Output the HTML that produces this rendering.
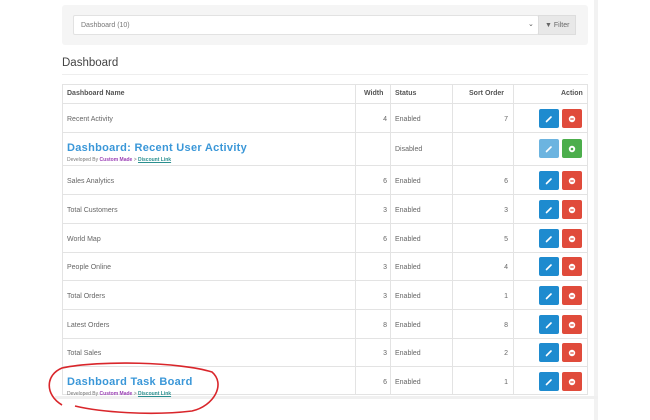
<!DOCTYPE html>
<html><head><style>
*{margin:0;padding:0;box-sizing:border-box}
body{width:650px;height:420px;background:#fff;font-family:"Liberation Sans",sans-serif;position:relative;overflow:hidden;color:#555}
.abs{position:absolute}
.cell{position:absolute;font-size:7px;color:#666}
.btn{position:absolute;width:20px;height:19px;border-radius:2px}
.btn svg{position:absolute;left:6px;top:5.5px}
.hl{position:absolute;left:62px;width:526px;height:1px;background:#e3e3e3}
.vl{position:absolute;top:84px;width:1px;height:311px;background:#e3e3e3}
</style></head><body>
<div class="abs" style="left:594px;top:0;width:4px;height:420px;background:#f2f2f2"></div>
<div class="abs" style="left:55px;top:396px;width:543px;height:3px;background:#f0f0f0"></div>
<div class="abs" style="left:62px;top:5px;width:526px;height:40px;background:#f5f5f5;border-radius:3px"></div>
<div class="abs" style="left:73px;top:15px;width:466px;height:20px;background:#fff;border:1px solid #e2e2e2;border-radius:2px"></div>
<div class="cell" style="left:81px;top:22px;color:#777">Dashboard (10)</div>
<div class="cell" style="left:528px;top:20px;color:#555">&#8964;</div>
<div class="abs" style="left:538px;top:15px;width:38px;height:20px;background:#e8e8e8;border:1px solid #ddd"></div>
<div class="cell" style="left:545px;top:22px;color:#666"><b>&#9660;</b> Filter</div>
<div class="abs" style="left:62px;top:57px;font-size:11.5px;color:#444">Dashboard</div>
<div class="abs" style="left:62px;top:74px;width:526px;height:1px;background:#eee"></div>
<div class="abs" style="left:62px;top:84px;width:526px;height:311px;border:1px solid #e3e3e3"></div>
<div class="hl" style="top:103px"></div><div class="hl" style="top:132px"></div><div class="hl" style="top:165px"></div><div class="hl" style="top:194px"></div><div class="hl" style="top:223px"></div><div class="hl" style="top:252px"></div><div class="hl" style="top:280px"></div><div class="hl" style="top:309px"></div><div class="hl" style="top:338px"></div><div class="hl" style="top:366px"></div>
<div class="vl" style="left:355px"></div><div class="vl" style="left:390px"></div><div class="vl" style="left:452px"></div><div class="vl" style="left:513px"></div>
<div class="cell" style="left:67px;top:90px;font-weight:bold;color:#555">Dashboard Name</div>
<div class="cell" style="left:364px;top:90px;font-weight:bold;color:#555">Width</div>
<div class="cell" style="left:395px;top:90px;font-weight:bold;color:#555">Status</div>
<div class="cell" style="left:469px;top:90px;font-weight:bold;color:#555">Sort Order</div>
<div class="cell" style="left:561px;top:90px;font-weight:bold;color:#555">Action</div>

<div id="rows"></div>
<script>
var rows=[["Recent Activity",4,"Enabled",7,118],[null,"","Disabled","",148],["Sales Analytics",6,"Enabled",6,180],["Total Customers",3,"Enabled",3,209],["World Map",6,"Enabled",5,238],["People Online",3,"Enabled",4,266],["Total Orders",3,"Enabled",1,295],["Latest Orders",8,"Enabled",8,324],["Total Sales",3,"Enabled",2,352],[null,6,"Enabled",1,381]];
var h="";
var pen='<svg width="8" height="8" viewBox="0 0 8 8"><path d="M1.5 6.5L6 2" stroke="#fff" stroke-width="1.6" stroke-linecap="round"/></svg>';
var minus='<svg width="8" height="8" viewBox="0 0 8 8"><circle cx="4" cy="4" r="3.2" fill="#fff"/><rect x="2.3" y="3.4" width="3.4" height="1.2" fill="#e04b3b"/></svg>';
var plus='<svg width="8" height="8" viewBox="0 0 8 8"><circle cx="4" cy="4" r="3.2" fill="#fff"/><circle cx="4" cy="4" r="1.3" fill="#4cae4c"/></svg>';
rows.forEach(function(r,i){var c=r[4];var t=c-2;
if(r[0])h+='<div class="cell" style="left:67px;top:'+t+'px">'+r[0]+'</div>';
h+='<div class="cell" style="left:340px;width:47px;text-align:right;top:'+t+'px">'+r[1]+'</div>';
h+='<div class="cell" style="left:395px;top:'+t+'px">'+r[2]+'</div>';
h+='<div class="cell" style="left:460px;width:48px;text-align:right;top:'+t+'px">'+r[3]+'</div>';
var dis=i==1;
h+='<div class="btn" style="left:539px;top:'+(c-9)+'px;background:'+(dis?'#6cb4e0':'#1e8bcf')+'">'+pen+'</div>';
h+='<div class="btn" style="left:562px;top:'+(c-9)+'px;background:'+(dis?'#4cae4c':'#e04b3b')+'">'+(dis?plus:minus)+'</div>';
});
document.getElementById('rows').innerHTML=h;
</script>
<div class="abs" style="left:67px;top:142px;font-size:11px;font-weight:bold;color:#3a97d8;letter-spacing:0.3px">Dashboard: Recent User Activity</div>
<div class="abs" style="left:67px;top:157px;font-size:5px;color:#777">Developed By <b style="color:#9b3fb5">Custom Made</b> &gt; <b style="color:#2a8f8f;text-decoration:underline">Discount Link</b></div>
<div class="abs" style="left:67px;top:376px;font-size:11px;font-weight:bold;color:#3a97d8;letter-spacing:0.3px">Dashboard Task Board</div>
<div class="abs" style="left:67px;top:391px;font-size:5px;color:#777">Developed By <b style="color:#9b3fb5">Custom Made</b> &gt; <b style="color:#2a8f8f;text-decoration:underline">Discount Link</b></div>
<svg class="abs" style="left:0;top:0" width="650" height="420"><path d="M62 405 C45 395 45 375 62 368 C100 360 180 362 212 372 C226 384 214 406 192 411 C150 416 100 412 75 406" fill="none" stroke="#d9262b" stroke-width="1.6"/></svg>
</body></html>
